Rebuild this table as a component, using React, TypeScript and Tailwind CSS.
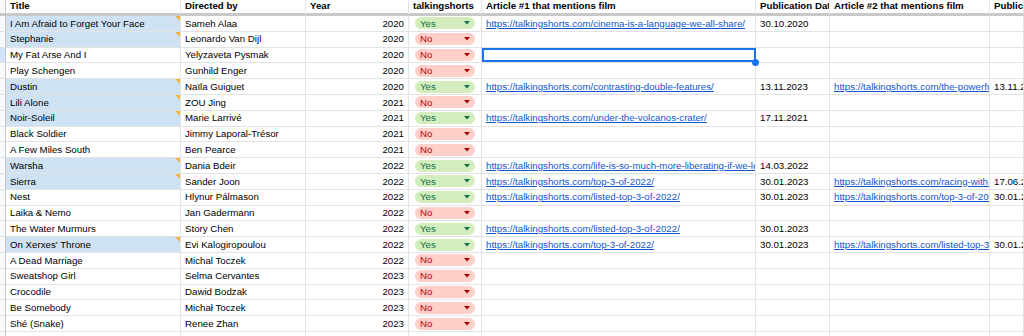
type Row = {
  title: string;
  dir: string;
  year: number;
  ts: boolean;
  a1?: string;
  p1?: string;
  a2?: string;
  p2?: string;
  blue?: boolean;
};

const rows: Row[] = [
  { title: "I Am Afraid to Forget Your Face", dir: "Sameh Alaa", year: 2020, ts: true, a1: "https://talkingshorts.com/cinema-is-a-language-we-all-share/", p1: "30.10.2020", blue: true },
  { title: "Stephanie", dir: "Leonardo Van Dijl", year: 2020, ts: false, blue: true },
  { title: "My Fat Arse And I", dir: "Yelyzaveta Pysmak", year: 2020, ts: false },
  { title: "Play Schengen", dir: "Gunhild Enger", year: 2020, ts: false },
  { title: "Dustin", dir: "Naïla Guiguet", year: 2020, ts: true, a1: "https://talkingshorts.com/contrasting-double-features/", p1: "13.11.2023", a2: "https://talkingshorts.com/the-powerful-double-features/", p2: "13.11.2023", blue: true },
  { title: "Lili Alone", dir: "ZOU Jing", year: 2021, ts: false, blue: true },
  { title: "Noir-Soleil", dir: "Marie Larrivé", year: 2021, ts: true, a1: "https://talkingshorts.com/under-the-volcanos-crater/", p1: "17.11.2021", blue: true },
  { title: "Black Soldier", dir: "Jimmy Laporal-Trésor", year: 2021, ts: false },
  { title: "A Few Miles South", dir: "Ben Pearce", year: 2021, ts: false },
  { title: "Warsha", dir: "Dania Bdeir", year: 2022, ts: true, a1: "https://talkingshorts.com/life-is-so-much-more-liberating-if-we-let-go/", p1: "14.03.2022", blue: true },
  { title: "Sierra", dir: "Sander Joon", year: 2022, ts: true, a1: "https://talkingshorts.com/top-3-of-2022/", p1: "30.01.2023", a2: "https://talkingshorts.com/racing-with-sierra/", p2: "17.06.2023", blue: true },
  { title: "Nest", dir: "Hlynur Pálmason", year: 2022, ts: true, a1: "https://talkingshorts.com/listed-top-3-of-2022/", p1: "30.01.2023", a2: "https://talkingshorts.com/top-3-of-2022/", p2: "30.01.2023" },
  { title: "Laika & Nemo", dir: "Jan Gadermann", year: 2022, ts: false },
  { title: "The Water Murmurs", dir: "Story Chen", year: 2022, ts: true, a1: "https://talkingshorts.com/listed-top-3-of-2022/", p1: "30.01.2023" },
  { title: "On Xerxes' Throne", dir: "Evi Kalogiropoulou", year: 2022, ts: true, a1: "https://talkingshorts.com/top-3-of-2022/", p1: "30.01.2023", a2: "https://talkingshorts.com/listed-top-3-of-2022/", p2: "30.01.2023", blue: true },
  { title: "A Dead Marriage", dir: "Michal Toczek", year: 2022, ts: false },
  { title: "Sweatshop Girl", dir: "Selma Cervantes", year: 2023, ts: false },
  { title: "Crocodile", dir: "Dawid Bodzak", year: 2023, ts: false },
  { title: "Be Somebody", dir: "Michał Toczek", year: 2023, ts: false },
  { title: "Shé (Snake)", dir: "Renee Zhan", year: 2023, ts: false },
];

const cell =
  "relative flex items-center overflow-hidden whitespace-nowrap border-r border-b border-[#e2e3e3] pl-1";

function Link({ href }: { href?: string }) {
  if (!href) return null;
  return <span className="text-[#1155cc] underline underline-offset-1">{href}</span>;
}

function Chip({ yes }: { yes: boolean }) {
  return (
    <span
      className={
        "ml-[2px] flex h-[12px] w-[60px] items-center justify-between rounded-full pl-[5px] pr-[5px] " +
        (yes ? "bg-[#d4edbc] text-[#11734b]" : "bg-[#ffcfc9] text-[#b10202]")
      }
    >
      {yes ? "Yes" : "No"}
      <svg width="6" height="4" viewBox="0 0 6 4">
        <polygon points="0,0 6,0 3,3.5" fill="currentColor" />
      </svg>
    </span>
  );
}

function Corner() {
  return (
    <svg className="absolute right-0 top-0" width="5" height="5" viewBox="0 0 5 5">
      <polygon points="0,0 5,0 5,5" fill="#f1b23c" />
    </svg>
  );
}

export default function App() {
  return (
    <div
      className="h-[336px] w-[1024px] overflow-hidden bg-white text-[9.7px] leading-none text-black"
      style={{ fontFamily: '"Liberation Sans", Arial, sans-serif' }}
    >
      <div className="grid grid-cols-[6px_175px_125px_103px_73px_274px_74px_160px_34px] grid-rows-[16px_repeat(21,15.8px)]">
        {/* header */}
        <div className="border-r border-b-[3px] border-r-[#c4c7c5] border-b-[#c8c8c8] bg-[#f8f9fa]" />
        {[
          "Title",
          "Directed by",
          "Year",
          "talkingshorts",
          "Article #1 that mentions film",
          "Publication Date",
          "Article #2 that mentions film",
          "Publication Date",
        ].map((h, i) => (
          <div
            key={i}
            className="flex items-center overflow-hidden whitespace-nowrap border-r border-b-[3px] border-r-[#e2e3e3] border-b-[#c8c8c8] pb-[2px] pl-1 font-bold"
          >
            {h}
          </div>
        ))}

        {rows.map((r, i) => (
          <div key={i} className="contents">
            <div
              className={
                "border-r border-b border-r-[#c4c7c5] border-b-[#e2e3e3] " +
                (i === 2 ? "bg-[#d3e3fd]" : "bg-[#f8f9fa]")
              }
            />
            <div className={cell + (r.blue ? " bg-[#cfe2f3]" : "")}>
              {r.title}
              {r.blue && <Corner />}
            </div>
            <div className={cell}>{r.dir}</div>
            <div className={cell + " justify-end pr-[4px]"}>{r.year}</div>
            <div className={cell}>
              <Chip yes={r.ts} />
            </div>
            {i === 2 ? (
              <div className="relative z-10 border-r border-b border-[#e2e3e3]">
                <div className="absolute inset-y-0 left-0 right-[-1px] border-2 border-[#1a73e8]" />
                <div className="absolute bottom-[-4px] right-[-4px] h-[7px] w-[7px] rounded-full bg-[#1a73e8]" />
              </div>
            ) : (
              <div className={cell}>
                <Link href={r.a1} />
              </div>
            )}
            <div className={cell}>{r.p1}</div>
            <div className={cell}>
              <Link href={r.a2} />
            </div>
            <div className={cell}>{r.p2}</div>
          </div>
        ))}

        {/* trailing empty row */}
        <div className="border-r border-b border-r-[#c4c7c5] border-b-[#e2e3e3] bg-[#f8f9fa]" />
        {Array.from({ length: 8 }).map((_, i) => (
          <div key={i} className={cell} />
        ))}
      </div>
    </div>
  );
}
